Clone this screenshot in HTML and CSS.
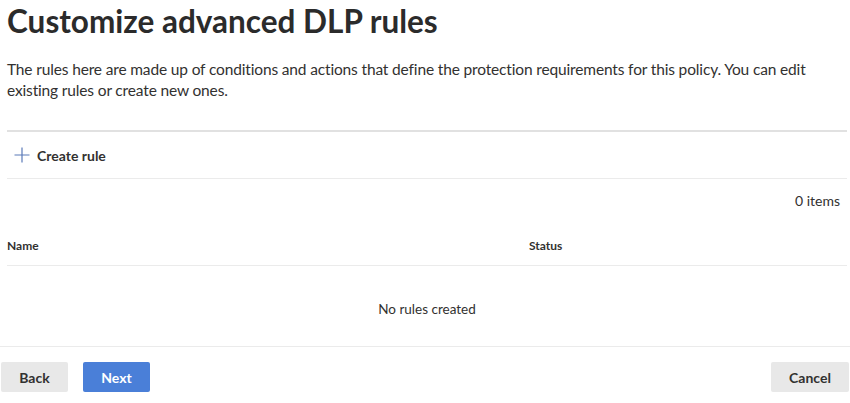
FILE: index.html
```html
<!DOCTYPE html>
<html>
<head>
<meta charset="utf-8">
<link rel="stylesheet" href="styles.css">
</head>
<body>
<div class="page">
  <div class="content">
    <h1 class="title">Customize advanced DLP rules</h1>
    <p class="desc">The rules here are made up of conditions and actions that define the protection requirements for this policy. You can edit existing rules or create new ones.</p>
    <div class="toolbar">
      <button class="cmd">
        <svg class="plus" width="16" height="16" viewBox="0 0 16 16"><path d="M8 0.5V15.5M0.5 8H15.5" stroke="#5a7ab8" stroke-width="1.2" fill="none"/></svg>
        <span>Create rule</span>
      </button>
    </div>
    <div class="count">0 items</div>
    <div class="thead">
      <div class="col-name">Name</div>
      <div class="col-status">Status</div>
    </div>
    <div class="empty">No rules created</div>
  </div>
  <div class="footer">
    <div class="left">
      <button class="btn">Back</button>
      <button class="btn primary">Next</button>
    </div>
    <button class="btn cancel">Cancel</button>
  </div>
</div>
</body>
</html>
```

FILE: styles.css
```css
html, body {
  margin: 0;
  padding: 0;
  background: #fff;
}
body {
  font-family: Lato, "Noto Sans", sans-serif;
  color: #323130;
  width: 850px;
  height: 403px;
  overflow: hidden;
}
.content {
  padding: 0 3px 0 7px;
}
.title {
  margin: 0;
  font-size: 31.5px;
  font-weight: 700;
  line-height: 40px;
  padding-top: 1px;
  color: #2b2b2b;
}
.desc {
  margin: 18px 0 0 0;
  font-size: 15.5px;
  letter-spacing: -0.15px;
  line-height: 21px;
  color: #323130;
  width: 840px;
}
.toolbar {
  margin-top: 29px;
  border-top: 2px solid #e1e1e1;
  border-bottom: 1px solid #ebebeb;
  height: 46px;
  display: flex;
  align-items: center;
}
.cmd {
  border: none;
  background: none;
  display: flex;
  align-items: center;
  gap: 7px;
  padding: 0 0 0 7px;
  font-family: inherit;
  font-size: 14px;
  font-weight: 700;
  color: #323130;
}
.count {
  text-align: right;
  padding-right: 7px;
  font-size: 14px;
  line-height: 20px;
  margin-top: 12px;
  color: #323130;
}
.thead {
  display: flex;
  padding: 27px 0 11px 0;
  line-height: 16px;
  border-bottom: 1px solid #ebebeb;
  font-size: 12px;
  font-weight: 700;
}
.col-name {
  width: 522px;
}
.empty {
  text-align: center;
  font-size: 13.5px;
  line-height: 20px;
  padding-top: 33px;
  height: 47px;
  color: #323130;
}
.footer {
  border-top: 1px solid #ebebeb;
  display: flex;
  justify-content: space-between;
  padding: 15px 1px 0 1px;
}
.left {
  display: flex;
  gap: 15px;
}
.btn {
  height: 30px;
  min-width: 67px;
  padding: 0 12px;
  border: none;
  border-radius: 2px;
  background: #e8e8e8;
  font-family: inherit;
  font-size: 14px;
  font-weight: 700;
  color: #323130;
}
.btn.cancel {
  min-width: 78px;
}
.btn.primary {
  background: #4a7fd8;
  color: #fff;
}
```
